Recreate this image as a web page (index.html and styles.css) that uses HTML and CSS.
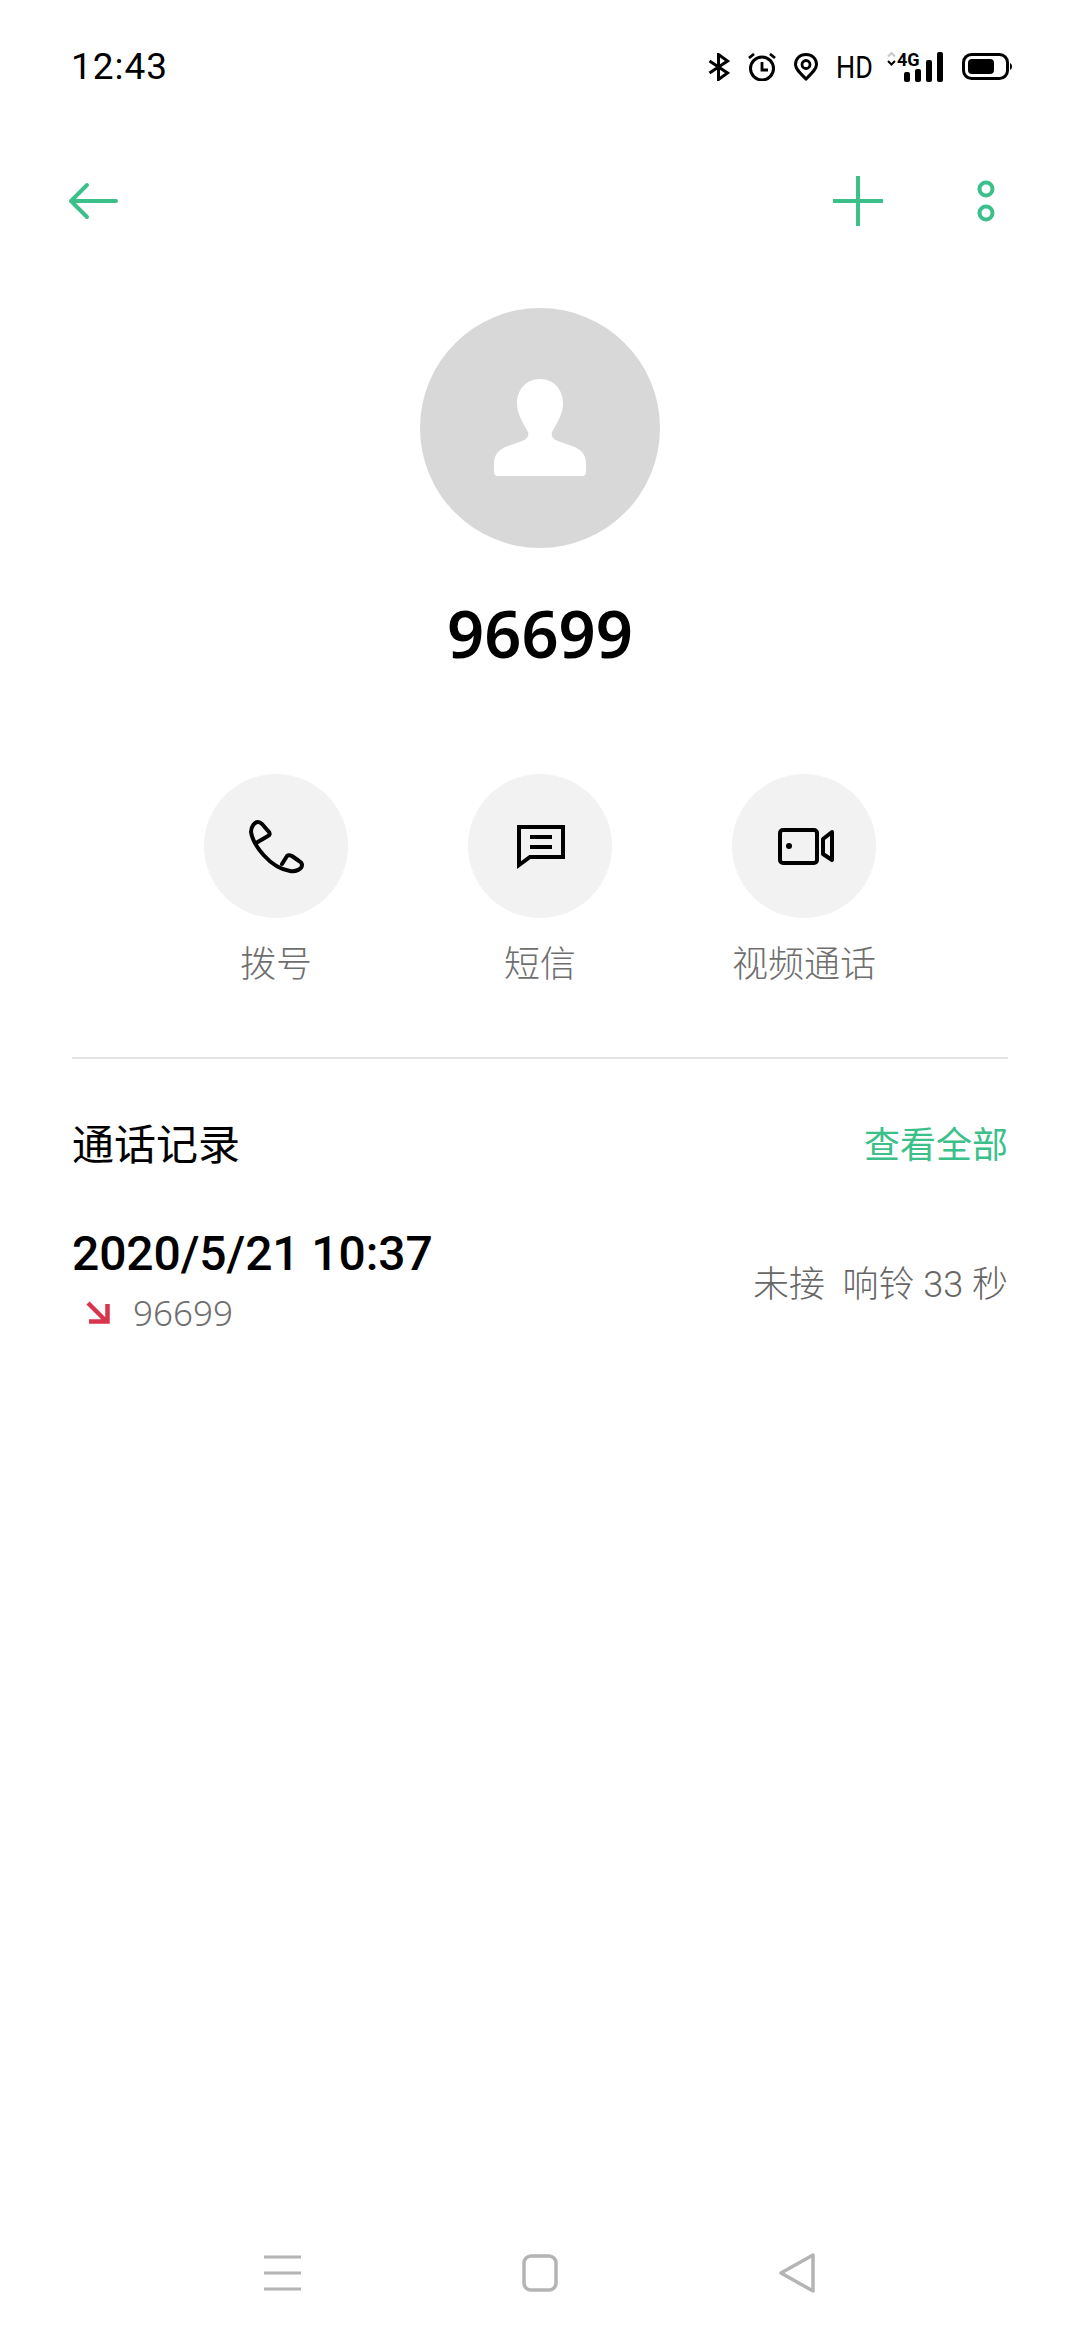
FILE: index.html
```html
<!DOCTYPE html>
<html lang="zh-CN">
<head>
<meta charset="utf-8">
<title>96699</title>
<link rel="stylesheet" href="styles.css">
</head>
<body>
<div class="page">
  <header class="status">
    <span class="time">12:43</span>
    <div class="status-icons">
      <svg class="ic-bt" width="22" height="28" viewBox="0 0 22 28"><path d="M1.5 8 L19.5 20 L10.5 26.5 V1.5 L19.5 8 L1.5 20" fill="none" stroke="#000" stroke-width="3"/></svg>
      <svg class="ic-alarm" width="28" height="28" viewBox="0 0 28 28"><circle cx="14" cy="15.500" r="11.500" fill="none" stroke="#000" stroke-width="3"/><path d="M14 9 V17 H20" fill="none" stroke="#000" stroke-width="2.800"/><path d="M1 5 L6 1 M27 5 L22 1" stroke="#000" stroke-width="2.800" fill="none"/></svg>
      <svg class="ic-loc" width="24" height="28" viewBox="0 0 24 28"><path d="M12 26 C6 20 1.5 16 1.5 11.5 C1.5 5.5 6 1.5 12 1.5 C18 1.5 22.5 5.5 22.5 11.5 C22.5 16 18 20 12 26 Z" fill="none" stroke="#000" stroke-width="3"/><circle cx="12" cy="11.5" r="4" fill="none" stroke="#000" stroke-width="2.800"/></svg>
      <span class="hd">HD</span>
      <div class="signal">
        <svg width="56" height="30" viewBox="0 0 56 30"><path d="M1 4.5 L4.5 1 L8 4.5" fill="none" stroke="#c8c8c8" stroke-width="2"/><path d="M1 9 L4.5 12.5 L8 9" fill="none" stroke="#000" stroke-width="2"/><rect x="17" y="20" width="6" height="10" rx="2"/><rect x="28" y="17" width="6" height="13" rx="2"/><rect x="39" y="8" width="6" height="22" rx="2"/><rect x="50" y="0" width="6" height="30" rx="2"/></svg>
        <span class="net">4G</span>
      </div>
      <svg class="ic-batt" width="50" height="28" viewBox="0 0 50 28"><rect x="1.5" y="1.5" width="44" height="24" rx="8" fill="none" stroke="#000" stroke-width="3"/><rect x="6" y="6" width="26" height="15" rx="4"/><path d="M48 10 C49.500 11 50 12 50 13.500 C50 15 49.500 16 48 17 Z"/></svg>
    </div>
  </header>

  <nav class="toolbar">
    <svg width="50" height="38" viewBox="0 0 50 38"><path d="M48 19 H3 M19 3 L3 19 L19 35" fill="none" stroke="#3bc08a" stroke-width="4" stroke-linecap="round" stroke-linejoin="round"/></svg>
    <div class="toolbar-right">
      <svg width="50" height="50" viewBox="0 0 50 50"><path d="M25 0 V50 M0 25 H50" stroke="#3bc08a" stroke-width="4" fill="none"/></svg>
      <svg width="18" height="42" viewBox="0 0 18 42"><circle cx="9" cy="9" r="6.500" fill="none" stroke="#3bc08a" stroke-width="4"/><circle cx="9" cy="33" r="6.500" fill="none" stroke="#3bc08a" stroke-width="4"/></svg>
    </div>
  </nav>

  <section class="profile">
    <div class="avatar">
      <svg width="240" height="240" viewBox="0 0 240 240"><path fill="#fff" d="M120 71 C134 71 143 82 143 95 C143 106 137 115 133 122 C130 127 132 131 138 133 L152 138 C161 141 166 146 166 156 L166 164 Q166 168 162 168 L78 168 Q74 168 74 164 L74 156 C74 146 79 141 88 138 L102 133 C108 131 110 127 107 122 C103 115 97 106 97 95 C97 82 106 71 120 71 Z"/></svg>
    </div>
    <h1 class="name">96699</h1>
  </section>

  <section class="actions">
    <div class="action">
      <div class="action-circle">
        <svg width="72" height="72" viewBox="0 0 72 72"><path d="M11 22 C13 35 30 58 50 61 C56 62 62 59 62 55 C62 53 61 52 59 51 L52 46 C50 45 48 45 47 46 L42 54 M11 22 C11 16 15 12 18 12 C20 12 21 13 22 14 L29 22 C30 24 30 25 28 26 L16 33" fill="none" stroke="#000" stroke-width="4" stroke-linejoin="round" stroke-linecap="round"/></svg>
      </div>
      <span class="action-label">拨号</span>
    </div>
    <div class="action">
      <div class="action-circle">
        <svg width="72" height="72" viewBox="0 0 72 72"><path d="M15 17 H59 V47 H26 L15 55 Z" fill="none" stroke="#000" stroke-width="4"/><path d="M26 27 H48 M26 37 H48" fill="none" stroke="#000" stroke-width="4"/></svg>
      </div>
      <span class="action-label">短信</span>
    </div>
    <div class="action">
      <div class="action-circle">
        <svg width="72" height="72" viewBox="0 0 72 72"><rect x="12" y="20" width="37" height="33" rx="3" fill="none" stroke="#000" stroke-width="4"/><circle cx="21" cy="36" r="3"/><path d="M64 22 L55 29 V44 L64 50 Z" fill="none" stroke="#000" stroke-width="4" stroke-linejoin="round"/></svg>
      </div>
      <span class="action-label">视频通话</span>
    </div>
  </section>

  <div class="divider"></div>

  <section class="log">
    <div class="log-head">
      <span class="log-title">通话记录</span>
      <span class="log-all">查看全部</span>
    </div>
    <div class="log-row">
      <div class="log-main">
        <div class="log-date">2020/5/21 10:37</div>
        <div class="log-sub">
          <svg width="24" height="24" viewBox="0 0 24 24"><path d="M2 2 L20 20 M21.500 3 V20.500 H3" fill="none" stroke="#d8344e" stroke-width="4.500"/></svg>
          <span class="log-num">96699</span>
        </div>
      </div>
      <span class="log-status">未接&nbsp; 响铃 33 秒</span>
    </div>
  </section>

  <footer class="navbar">
    <svg width="38" height="36" viewBox="0 0 38 36"><path d="M0 2 H37 M0 18 H37 M0 34 H37" stroke="#b4b4b4" stroke-width="3" fill="none"/></svg>
    <svg width="36" height="38" viewBox="0 0 36 38"><rect x="2" y="2" width="32" height="34" rx="7" fill="none" stroke="#b4b4b4" stroke-width="3.500"/></svg>
    <svg width="38" height="42" viewBox="0 0 38 42"><path d="M35 3 V39 L3 21 Z" fill="none" stroke="#b4b4b4" stroke-width="3.500" stroke-linejoin="round"/></svg>
  </footer>
</div>
</body>
</html>
```
FILE: styles.css
```css
* { box-sizing: border-box; margin: 0; padding: 0; }
html, body { background: #fff; }
body { width: 1080px; height: 2340px; overflow: hidden; font-family: "Noto Sans CJK SC", "Noto Sans", sans-serif; }
.page { width: 1080px; height: 2340px; display: flex; flex-direction: column; }

.status { height: 52px; margin-top: 41px; padding: 0 68px 0 71px; display: flex; justify-content: space-between; align-items: center; }
.time { font-family: Roboto, sans-serif; font-size: 37px; font-weight: 400; letter-spacing: 1px; color: #000; line-height: 40px; }
.status-icons { display: flex; align-items: center; gap: 18px; }
.hd { display: block; width: 36px; font-family: Roboto, sans-serif; font-size: 32px; line-height: 30px; color: #000; white-space: nowrap; transform: scaleX(.84); transform-origin: left center; }
.signal { position: relative; width: 56px; height: 30px; margin-left: -3px; margin-right: 1px; }
.signal svg { display: block; }
.net { position: absolute; left: 10px; top: -1px; font-family: Roboto, sans-serif; font-size: 18px; line-height: 18px; font-weight: 700; color: #000; }

.toolbar { margin-top: 78px; padding: 0 85px 0 68px; height: 60px; display: flex; justify-content: space-between; align-items: center; }
.toolbar-right { display: flex; align-items: center; gap: 94px; }

.profile { margin-top: 77px; display: flex; flex-direction: column; align-items: center; }
.avatar { width: 240px; height: 240px; border-radius: 50%; background: #d8d8d8; }
.name { margin-top: 41px; font-family: "Noto Sans", sans-serif; font-size: 65px; line-height: 88px; font-weight: 600; color: #000; letter-spacing: 0; }

.actions { margin-top: 97px; padding: 0 204px; display: flex; justify-content: space-between; }
.action { width: 144px; display: flex; flex-direction: column; align-items: center; }
.action-circle { width: 144px; height: 144px; border-radius: 50%; background: #f2f2f2; display: flex; align-items: center; justify-content: center; }
.action-label { margin-top: 17px; font-size: 36px; line-height: 52px; font-weight: 300; color: #6e6e6e; white-space: nowrap; }

.divider { margin: 70px 72px 0; height: 2px; background: #e4e4e4; }

.log { padding: 0 72px; }
.log-head { margin-top: 53px; display: flex; justify-content: space-between; align-items: center; height: 60px; }
.log-title { font-size: 42px; line-height: 60px; font-weight: 400; color: #000; }
.log-all { font-size: 36px; line-height: 52px; color: #3bc08a; }
.log-row { margin-top: 52px; display: flex; justify-content: space-between; align-items: flex-start; }
.log-date { font-family: Roboto, sans-serif; font-size: 48px; line-height: 60px; font-weight: 500; letter-spacing: -0.1px; color: #000; }
.log-sub { margin-top: 6px; padding-left: 14px; display: flex; align-items: center; gap: 23px; }
.log-num { font-family: "Noto Sans", sans-serif; font-size: 35px; line-height: 46px; font-weight: 300; color: #6e6e6e; }
.log-status { margin-top: 35px; font-family: Roboto, "Noto Sans CJK SC", sans-serif; font-size: 36px; line-height: 52px; font-weight: 300; color: #666; white-space: nowrap; }

.navbar { margin-top: auto; margin-bottom: 46px; padding: 0 264px; display: flex; justify-content: space-between; align-items: center; }
```
